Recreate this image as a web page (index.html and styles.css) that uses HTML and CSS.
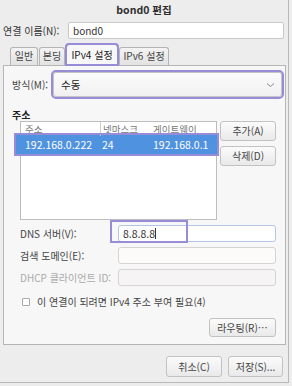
FILE: index.html
```html
<!doctype html>
<html lang="ko">
<head>
    <meta charset="UTF-8">
    <title>bond0 편집</title>
    <link rel="stylesheet" href="styles.css">
</head>
<body>
    <div id="window">
        <div class="title">bond0 편집</div>
        <div class="name-row">
            <span class="name-label">연결 이름(N):</span>
            <div class="field name-field">bond0</div>
        </div>
        <ul class="tabs">
            <li>일반</li>
            <li>본딩</li>
            <li class="active">IPv4 설정</li>
            <li>IPv6 설정</li>
        </ul>
        <div class="panel">
            <div class="method-row">
                <span class="method-label">방식(M):</span>
                <div class="combo">
                    <span>수동</span>
                    <svg width="9" height="6" viewBox="0 0 9 6"><path d="M1 1.5 L4.5 4.5 L8 1.5" fill="none" stroke="#888" stroke-width="1"/></svg>
                </div>
            </div>
            <div class="section-title">주소</div>
            <div class="address-area">
                <div class="addr-list">
                    <div class="addr-head">
                        <span class="col1">주소</span>
                        <span class="col2">넷마스크</span>
                        <span class="col3">게이트웨이</span>
                    </div>
                    <div class="addr-row selected">
                        <span class="col1">192.168.0.222</span>
                        <span class="col2">24</span>
                        <span class="col3">192.168.0.1</span>
                    </div>
                </div>
                <div class="addr-buttons">
                    <div class="btn">추가(A)</div>
                    <div class="btn">삭제(D)</div>
                </div>
            </div>
            <div class="form-row first">
                <span class="form-label">DNS 서버(V):</span>
                <div class="field form-field dns">8.8.8.8<span class="cursor"></span>
                    <div class="mark"></div>
                </div>
            </div>
            <div class="form-row">
                <span class="form-label">검색 도메인(E):</span>
                <div class="field form-field"></div>
            </div>
            <div class="form-row">
                <span class="form-label disabled">DHCP 클라이언트 ID:</span>
                <div class="field form-field off"></div>
            </div>
            <div class="check-row">
                <span class="checkbox"></span>
                <span>이 연결이 되려면 IPv4 주소 부여 필요(4)</span>
            </div>
            <div class="route-row">
                <div class="btn route">라우팅(R)…</div>
            </div>
        </div>
        <div class="footer">
            <div class="btn big">취소(C)</div>
            <div class="btn big">저장(S)...</div>
        </div>
    </div>
</body>
</html>
```

FILE: styles.css
```css
*{
    margin: 0;
    padding: 0;
    box-sizing: border-box;
}
ul{
    list-style: none;
}
body{
    background: #ececec;
    font-family: "Noto Sans CJK KR", "DejaVu Sans", sans-serif;
    font-size: 10px;
    color: #333;
}
/***창***/
#window{
    width: 289px;
    height: 383px;
    background: #ededed;
    border-right: 1px solid #b9b9b9;
    border-bottom: 1px solid #b9b9b9;
    display: flex;
    flex-direction: column;
}
.title{
    height: 21px;
    line-height: 20px;
    text-align: center;
    font-weight: bold;
    font-size: 10.5px;
    color: #2e2e2e;
}
.name-row{
    display: flex;
    align-items: center;
    padding-left: 3px;
    height: 18px;
}
.name-label{
    width: 65px;
}
.field{
    background: #fff;
    border: 1px solid #c9c9c9;
    border-radius: 2px;
    height: 17px;
    line-height: 15px;
    padding-left: 4px;
}
.name-field{
    width: 216px;
}
/***탭***/
.tabs{
    display: flex;
    align-items: flex-end;
    height: 26px;
    padding-left: 10px;
}
.tabs li{
    height: 18px;
    line-height: 16px;
    padding: 0;
    text-align: center;
    white-space: nowrap;
    border: 1px solid #b4b4b4;
    border-bottom: none;
    border-radius: 3px 3px 0 0;
    background: linear-gradient(#f4f4f4, #e2e2e2);
    color: #444;
    margin-right: 1px;
}
.tabs li:nth-child(1){ width: 28px; }
.tabs li:nth-child(2){ width: 26px; }
.tabs li:nth-child(4){ width: 50px; }
.tabs .active{
    width: 52px;
    height: 21px;
    line-height: 19px;
    background: #f7f7f7;
    color: #222;
    outline: 2px solid #968cd7;
    outline-offset: -1px;
    position: relative;
    z-index: 1;
}
.panel{
    margin-left: 3px;
    width: 283px;
    height: 280px;
    border: 1px solid #b5b5b5;
    background: #f7f7f7;
    display: flex;
    flex-direction: column;
}
.method-row{
    display: flex;
    align-items: center;
    margin-top: 6px;
    padding-left: 8px;
}
.method-label{
    width: 41px;
    color: #444;
}
.combo{
    width: 229px;
    height: 25px;
    background: linear-gradient(#fbfbfb, #f1f1f1);
    border: 1px solid #c4c4c4;
    border-radius: 3px;
    outline: 2px solid #968cd7;
    display: flex;
    align-items: center;
    justify-content: space-between;
    padding: 0 6px 0 7px;
    font-size: 10.5px;
    color: #222;
}
.section-title{
    margin-top: 11px;
    padding-left: 8px;
    font-weight: bold;
    height: 13px;
    line-height: 13px;
    color: #222;
}
.address-area{
    display: flex;
    padding-left: 16px;
}
.addr-list{
    width: 197px;
    height: 99px;
    background: #fff;
    border: 1px solid #bdbdbd;
}
.addr-head, .addr-row{
    display: flex;
    align-items: center;
}
.addr-head{
    height: 13px;
    color: #777;
    font-size: 9.5px;
}
.addr-head .col2{
    border-left: 1px solid #d0d0d0;
}
.col1{
    width: 79px;
    padding-left: 4px;
}
.col2{
    width: 53px;
    padding-left: 2px;
}
.addr-row{
    height: 19px;
    font-size: 10.5px;
}
.addr-row.selected{
    background: #4f92e0;
    color: #fff;
    outline: 2px solid #968cd7;
    margin-left: -5px;
    padding-left: 5px;
    width: 201px;
}
.addr-buttons{
    display: flex;
    flex-direction: column;
    gap: 5px;
    margin-left: 3px;
}
.btn{
    width: 56px;
    height: 20px;
    line-height: 18px;
    text-align: center;
    white-space: nowrap;
    border: 1px solid #c2c2c2;
    border-radius: 3px;
    background: linear-gradient(#fbfbfb, #e9e9e9);
    color: #444;
}
/***입력***/
.form-row{
    display: flex;
    align-items: center;
    padding-left: 16px;
    margin-top: 5px;
}
.form-label{
    width: 98px;
    color: #444;
}
.form-label.disabled{
    color: #aaa;
}
.form-field{
    width: 158px;
    height: 17px;
    background: #fdfafa;
    border-color: #d6d3d3;
    border-radius: 3px;
}
.form-field.off{
    background: #f6f4f4;
}
.dns{
    position: relative;
    background: #fff;
    border-color: #b3c6e3;
    font-size: 10.5px;
    color: #333;
}
.cursor{
    display: inline-block;
    width: 1px;
    height: 11px;
    background: #333;
    vertical-align: -1px;
}
.mark{
    position: absolute;
    left: -9px;
    top: -6px;
    width: 78px;
    height: 23px;
    border: 2px solid #968cd7;
}
.check-row{
    display: flex;
    align-items: center;
    gap: 7px;
    padding-left: 18px;
    margin-top: 8px;
    color: #444;
}
.checkbox{
    width: 8px;
    height: 8px;
    border: 1px solid #aaa;
    border-radius: 1px;
    background: #fff;
}
.route-row{
    display: flex;
    justify-content: flex-end;
    padding-right: 9px;
    margin-top: 9px;
}
.btn.route{
    width: 67px;
    height: 19px;
    line-height: 17px;
}
.footer{
    display: flex;
    justify-content: flex-end;
    gap: 6px;
    padding-right: 5px;
    margin-top: 11px;
}
.btn.big{
    height: 21px;
    line-height: 19px;
}
.btn.big:first-child{
    width: 56px;
}
.btn.big:last-child{
    width: 55px;
}
```
